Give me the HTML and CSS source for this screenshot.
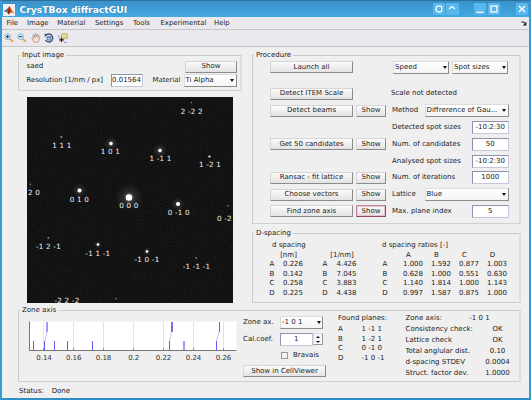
FILE: index.html
```html
<!DOCTYPE html>
<html lang="en">
<head>
<meta charset="utf-8">
<title>CrysTBox diffractGUI</title>
<link rel="stylesheet" href="styles.css">
</head>
<body>
<div class="window">
  <header class="titlebar">
    <svg class="logo" viewBox="0 0 12 12"><rect width="12" height="12" fill="#eef0f4"/><path d="M1 7 4 5.2 6.6 2 8 4.8 11 9.5 8.4 8.2 5.5 10.6 4 8.2Z" fill="#d9541e"/><path d="M1 7 4 5.2 5.4 3.8 4.4 8.4Z" fill="#3f74b8"/><path d="M6.6 2 7 8.8 5.5 10.6 5 7Z" fill="#8d2418"/></svg>
    <h1>CrysTBox diffractGUI</h1>
    <div class="controls">
      <span class="ctl"><svg viewBox="0 0 12 12"><rect x="3.2" y="3.2" width="5.6" height="5.6" rx="1.5"/></svg></span>
      <span class="ctl"><svg viewBox="0 0 12 12"><path d="M3 6 6 3.5 9 6"/></svg></span>
      <span class="ctl gap-l"><svg viewBox="0 0 12 12"><path d="M2.5 9.3H9.5"/></svg></span>
      <span class="ctl"><svg viewBox="0 0 12 12"><rect x="3" y="3" width="6" height="6"/></svg></span>
      <span class="ctl gap-l"><svg viewBox="0 0 12 12"><path d="M3 3 9 9M9 3 3 9"/></svg></span>
    </div>
  </header>
  <nav class="menubar">
    <span class="m1">File</span><span class="m2">Image</span><span class="m3">Material</span><span class="m4">Settings</span><span class="m5">Tools</span><span class="m6">Experimental</span><span>Help</span>
    <svg class="dock" viewBox="0 0 6 5"><path d="M.5 1H3L4.500 3" fill="none" stroke="#111"/><path d="M5.4.8V4.500H2Z" fill="#111"/></svg>
  </nav>
  <div class="toolbar">
    <svg viewBox="0 0 10 10"><path d="M5.8 5.8 9 9" stroke="#d99a3c" stroke-width="1.6"/><circle cx="3.6" cy="3.6" r="2.8" fill="#d4effb" stroke="#7fa9cc" stroke-width=".9"/><path d="M2 3.6H5.2M3.6 2V5.2" stroke="#1c4470" stroke-width="1"/></svg>
    <svg viewBox="0 0 10 10"><path d="M5.8 5.8 9 9" stroke="#d99a3c" stroke-width="1.6"/><circle cx="3.6" cy="3.6" r="2.8" fill="#d4effb" stroke="#7fa9cc" stroke-width=".9"/><path d="M2 3.6H5.2" stroke="#1c4470" stroke-width="1"/></svg>
    <svg viewBox="0 0 10 10"><path d="M3 9 .8 5.5 1.4 4.7 2.7 5.8 1.9 2 2.8 1.5 3.9 4.2 4 .8H5L5.4 4 6.4 1.2 7.3 1.5 7.1 4.6 8.4 3.1 9.1 3.7 7.6 7.5 7 9.4Z" fill="#fae3cc" stroke="#a08a86" stroke-width=".7"/></svg>
    <svg viewBox="0 0 10 10"><path d="M1.7 2.4A4 4 0 1 1 1.4 7.2" fill="none" stroke="#3c5681" stroke-width="1.3"/><path d="M.5.8 4.2 1 1 4Z" fill="#3c5681"/><path d="M3.2 3.6H6.8V7H3.2ZM3.2 4.8H6.8" fill="#c9d6e6" stroke="#4c648c" stroke-width=".8"/></svg>
    <svg viewBox="0 0 10 10"><rect x="3.4" y=".7" width="6" height="5" rx=".5" fill="#dedb8d" stroke="#a3a168" stroke-width=".6"/><path d="M.3 2.2Q1.2 3 1 5.4M6 9.2 9 9.6" fill="none" stroke="#7d78f0" stroke-width=".9"/><path d="M1.2 6.8H5.8M3.5 4.5V9.1" stroke="#111" stroke-width="1.2"/></svg>
  </div>
  <main class="content">
    <div class="columns">
      <section class="left">
        <fieldset class="panel input-panel">
          <legend>Input image</legend>
          <div class="row"><span class="grow">saed</span><button class="btn btn-saed">Show</button></div>
          <div class="row row2"><span class="reslabel">Resolution [1/nm / px]</span><span class="field res">0.01564</span><span class="matlabel">Material</span><span class="select mat">Ti Alpha</span></div>
        </fieldset>
        <svg class="pattern" viewBox="27 97 206 206">
          <defs>
            <radialGradient id="glow"><stop offset="0" stop-color="#fff" stop-opacity=".5"/><stop offset=".4" stop-color="#fff" stop-opacity=".1"/><stop offset="1" stop-color="#fff" stop-opacity="0"/></radialGradient>
            <filter id="grain" x="0" y="0" width="1" height="1"><feTurbulence type="fractalNoise" baseFrequency=".8" numOctaves="2"/><feColorMatrix values="0 0 0 0 1  0 0 0 0 1  0 0 0 0 1  .12 0 0 0 -.04"/></filter>
            <filter id="soft"><feGaussianBlur stdDeviation=".4"/></filter>
          </defs>
          <rect x="27" y="97" width="206" height="206" fill="#0e0e0e"/>
          <rect x="27" y="97" width="206" height="206" filter="url(#grain)"/>
          <g fill="url(#glow)"><circle cx="129" cy="197.500" r="14"/><circle cx="79.500" cy="190.500" r="7"/><circle cx="178" cy="204" r="7"/><circle cx="111" cy="143.500" r="7"/><circle cx="160" cy="150.500" r="7"/><circle cx="98" cy="244.500" r="4"/><circle cx="147" cy="251.500" r="4"/></g>
          <g fill="#fff" filter="url(#soft)"><circle cx="129" cy="197.500" r="3.200"/><circle cx="79.500" cy="190.500" r="2"/><circle cx="178" cy="204" r="2"/><circle cx="111" cy="143.500" r="1.700"/><circle cx="160" cy="150.500" r="1.700"/><circle cx="98" cy="244.500" r="1.300"/><circle cx="147" cy="251.500" r="1.300"/><circle cx="209.500" cy="156.500" r="1.100"/></g>
          <g fill="#999"><circle cx="61.300" cy="137" r="1"/><circle cx="191.500" cy="102.500" r=".7"/><circle cx="30.300" cy="184.300" r=".7"/><circle cx="227.700" cy="205.700" r=".8"/><circle cx="48.300" cy="237.800" r=".9"/><circle cx="196.300" cy="257.800" r=".9"/><circle cx="116" cy="298.700" r=".8"/></g>
          <g class="spots">
            <text x="191.700" y="113.500">2 -2 2</text><text x="61.800" y="147.500">1 1 1</text><text x="110.500" y="154">1 0 1</text><text x="160.500" y="161">1 -1 1</text><text x="210" y="167">1 -2 1</text>
            <text x="30.500" y="194.500">0 2 0</text><text x="79.500" y="201.500">0 1 0</text><text x="129" y="208">0 0 0</text><text x="178.700" y="214.700">0 -1 0</text><text x="228" y="221">0 -2 0</text>
            <text x="48.500" y="248.700">-1 2 -1</text><text x="97.800" y="255.500">-1 1 -1</text><text x="147" y="262">-1 0 -1</text><text x="196.500" y="268.700">-1 -1 -1</text><text x="67" y="302.500">-2 2 -2</text>
          </g>
        </svg>
      </section>
      <section class="right">
        <fieldset class="panel proc">
          <legend>Procedure</legend>
          <div class="prow first"><button class="btn">Launch all</button><span></span><span class="pair"><span class="select">Speed</span><span class="select">Spot sizes</span></span></div>
          <div class="prow"><button class="btn">Detect ITEM Scale</button><span></span><span class="lab nudge">Scale not detected</span></div>
          <div class="prow"><button class="btn">Detect beams</button><button class="btn">Show</button><span class="lab">Method</span><span class="select wide">Diffrerence of Gau...</span></div>
          <div class="prow"><span></span><span></span><span class="lab">Detected spot sizes</span><span class="field">-10:2:30</span></div>
          <div class="prow"><button class="btn">Get 50 candidates</button><button class="btn">Show</button><span class="lab">Num. of candidates</span><span class="field">50</span></div>
          <div class="prow"><span></span><span></span><span class="lab">Analysed spot sizes</span><span class="field">-10:2:30</span></div>
          <div class="prow"><button class="btn">Ransac - fit lattice</button><button class="btn">Show</button><span class="lab">Num. of iterations</span><span class="field">1000</span></div>
          <div class="prow"><button class="btn">Choose vectors</button><button class="btn">Show</button><span class="lab">Lattice</span><span class="select wide">Blue</span></div>
          <div class="prow"><button class="btn">Find zone axis</button><button class="btn focus">Show</button><span class="lab">Max. plane index</span><span class="field">5</span></div>
        </fieldset>
        <fieldset class="panel dsp">
          <legend>D-spacing</legend>
          <div class="dgrid">
            <span class="h1c">d spacing</span><span class="h2c">d spacing ratios [-]</span>
            <span></span><span class="hd">[nm]</span><span></span><span></span><span class="hd">[1/nm]</span><span></span><span></span><span></span><span class="hd">A</span><span class="hd">B</span><span class="hd">C</span><span class="hd">D</span>
            <span>A</span><span>0.226</span><span></span><span>A</span><span>4.426</span><span></span><span>A</span><span></span><span>1.000</span><span>1.592</span><span>0.877</span><span>1.003</span>
            <span>B</span><span>0.142</span><span></span><span>B</span><span>7.045</span><span></span><span>B</span><span></span><span>0.628</span><span>1.000</span><span>0.551</span><span>0.630</span>
            <span>C</span><span>0.258</span><span></span><span>C</span><span>3.883</span><span></span><span>C</span><span></span><span>1.140</span><span>1.814</span><span>1.000</span><span>1.143</span>
            <span>D</span><span>0.225</span><span></span><span>D</span><span>4.438</span><span></span><span>D</span><span></span><span>0.997</span><span>1.587</span><span>0.875</span><span>1.000</span>
          </div>
        </fieldset>
      </section>
    </div>
    <fieldset class="panel zone">
      <legend>Zone axis</legend>
      <div class="zcols">
        <svg class="plot" viewBox="24 314 216 50">
          <rect x="29.500" y="321.500" width="207" height="29" fill="#fff"/>
          <path d="M43.500 322V350M73.500 322V350M103.500 322V350M133.500 322V350M163.500 322V350M193.500 322V350M223.500 322V350" stroke="#e2e2e2"/>
          <path d="M45 341 47.300 331M169.500 341 171.700 331M216.500 341 219.300 331" stroke="#c4c4f8" fill="none"/>
          <path d="M33.500 341V350M44.500 341V350M54.500 341V350M67.500 341V350M92.500 341V350M169.500 341V350M216.500 341V350M219.500 322V332" stroke="#5c5cf5"/>
          <path d="M47 322V332" stroke="#9c9cf8" stroke-width="2"/><path d="M172 322V332" stroke="#7070f5" stroke-width="2"/><path d="M184 341V350" stroke="#9c9cf8" stroke-width="2"/>
          <path d="M29.500 321.500V350.500H236.500M43.500 350V348.500M73.500 350V348.500M103.500 350V348.500M133.500 350V348.500M163.500 350V348.500M193.500 350V348.500M223.500 350V348.500" fill="none" stroke="#555" stroke-width=".8"/>
          <g class="ticks"><text x="44" y="359.500">0.14</text><text x="73.700" y="359.500">0.16</text><text x="103.500" y="359.500">0.18</text><text x="133.700" y="359.500">0.2</text><text x="163.500" y="359.500">0.22</text><text x="193.500" y="359.500">0.24</text><text x="223.500" y="359.500">0.26</text></g>
        </svg>
        <div class="zctl">
          <div class="zr"><span class="zl">Zone ax.</span><span class="select zs">-1 0 1</span></div>
          <div class="zr"><span class="zl">Cal.coef.</span><span class="field zf">1</span><span class="spin"><i class="up"></i><i class="down"></i></span></div>
          <div class="zr chk"><i class="box"></i><span>Bravais</span></div>
          <button class="btn cell">Show in CellViewer</button>
        </div>
        <div class="found">
          <span class="fh">Found planes:</span>
          <span>A</span><span>1 -1 1</span><span>B</span><span>1 -2 1</span><span>C</span><span>0 -1 0</span><span>D</span><span>-1 0 -1</span>
        </div>
        <div class="checks">
          <span>Zone axis:</span><span class="zv">-1 0 1</span>
          <span>Consistency check:</span><span>OK</span>
          <span>Lattice check</span><span>OK</span>
          <span>Total anglular dist.</span><span>0.10</span>
          <span>d-spacing STDEV</span><span>0.0004</span>
          <span>Struct. factor dev.</span><span>1.0000</span>
        </div>
      </div>
    </fieldset>
    <footer class="status"><span>Status:</span><span>Done</span></footer>
  </main>
</div>
</body>
</html>
```
FILE: styles.css
```css
* { box-sizing: border-box; }
body {
  margin: 0;
  width: 531px;
  height: 400px;
  overflow: hidden;
  font: 7px/9px "DejaVu Sans", sans-serif;
  color: #222;
}
.window {
  display: flex;
  flex-direction: column;
  width: 531px;
  height: 400px;
  background: #efefef;
  border: 2px solid #3a9bd3;
  border-top: 1px solid #2b6f9c;
  border-bottom-color: #2f8fc6;
  white-space: nowrap;
}
.titlebar {
  display: flex;
  align-items: center;
  height: 16px;
  padding-left: 1px;
  background: linear-gradient(#3a92c8, #43a8e2);
  color: #fff;
}
.logo { width: 12px; height: 12px; margin-top: 1px; }
h1 {
  flex: 1;
  margin: 1px 0 0 4.5px;
  font-size: 9.2px;
  line-height: 14px;
  text-shadow: 0 0 1px #2c6f9c;
}
.controls { display: flex; gap: 1.5px; margin-right: 1px; }
.ctl { width: 12.3px; height: 12.3px; background: #58b7ec; border-radius: 1px; }
.ctl.gap-l { margin-left: 14px; }
.ctl svg { display: block; width: 12px; height: 12px; fill: none; stroke: #fff; stroke-width: 1.3; }
.menubar {
  display: flex;
  align-items: center;
  height: 13px;
  padding-left: 4.5px;
  background: #ebe9ed;
  border-bottom: 1px solid #c6c5c8;
}
.menubar span { font-size: 6.9px; }
.m1, .m2, .m3, .m4, .m5, .m6 { flex: none; }
.m1 { width: 20.5px; }
.m2 { width: 30.3px; }
.m3 { width: 37.7px; }
.m4 { width: 38px; }
.m5 { width: 27.5px; }
.m6 { width: 53.5px; }
.dock { width: 6px; height: 5px; margin-left: auto; margin-right: 2.5px; }
.toolbar {
  display: flex;
  align-items: center;
  gap: 3.4px;
  height: 17px;
  padding-left: 2px;
  background: #ebe9ed;
  border-bottom: 1px solid #c6c5c8;
}
.toolbar svg { width: 10px; height: 10px; fill: none; }
.content { flex: 1; padding: 3px 8px 0 16px; }
.columns { display: flex; justify-content: space-between; height: 255px; }
.left { width: 224px; }
.right { width: 269px; }
.panel {
  margin: 0;
  padding: 0;
  min-width: 0;
  border: 1px solid #cbcbcb;
  border-right: 2px solid #dedede;
  border-bottom-color: #d0d0d0;
}
legend { margin-left: 1px; padding: 1px 2px 0; line-height: 9px; }
.input-panel { height: 41px; }
.row { display: flex; align-items: center; height: 13px; padding: 0 3px 0 7.5px; }
.row2 { height: 14px; }
.grow { flex: 1; }
.btn {
  display: block;
  height: 12px;
  padding: 0;
  border: 1px solid #d6d6d6;
  border-right-color: #8b8b8b;
  border-bottom-color: #8b8b8b;
  border-radius: 0;
  background: linear-gradient(#fbfbfb, #e3e3e3);
  color: #222;
  font: 7px/9px "DejaVu Sans", sans-serif;
  text-align: center;
}
.btn.focus { border-color: #c588a3; border-right-color: #8e4868; border-bottom-color: #8e4868; outline: 1px solid #e5c3d1; outline-offset: -2px; }
.btn-saed { width: 52px; }
.reslabel { width: 84px; font-size: 6.9px; }
.field {
  height: 13px;
  border: 1px solid #8f8fae;
  border-right-color: #c6c6da;
  border-bottom-color: #c6c6da;
  background: #fff;
  text-align: center;
  line-height: 11px;
}
.res { width: 32px; }
.matlabel { margin-left: 10px; width: 31px; font-size: 6.9px; }
.select {
  display: flex;
  align-items: center;
  justify-content: space-between;
  height: 13px;
  padding: 0 1.5px 0 1px;
  border: 1px solid #dcdcdc;
  border-right-color: #8b8b8b;
  border-bottom-color: #8b8b8b;
  background: linear-gradient(#fff, #f4f4f4);
}
.select::after { content: ""; border: 2.5px solid transparent; border-top: 3px solid #111; border-bottom: 0; }
.mat { width: 53px; }
.pattern { display: block; width: 206px; height: 206px; margin: 6px 0 0 9px; overflow: visible; }
.spots { fill: #f2f2f2; font-size: 7.2px; text-anchor: middle; letter-spacing: .2px; }
.proc { height: 174px; }
.prow {
  display: grid;
  grid-template-columns: 83px 30px auto 1fr;
  column-gap: 3px;
  align-items: center;
  height: 16.8px;
  padding: 0 10.5px 0 17px;
}
.prow.first { margin-bottom: 9.7px; margin-top: -1px; }
.pair { display: flex; gap: 3px; margin-left: 4px; grid-column: 3 / 5; }
.pair .select { width: 56px; }
.lab { margin-left: 3px; }
.nudge { margin-left: 2px; }
.prow > .field { width: 36.5px; justify-self: end; }
.wide { width: 84px; justify-self: end; }
.dsp { margin-top: 4px; height: 75px; }
.dgrid {
  display: grid;
  grid-template-columns: 20px 22px 11px 20px 23px 17px 20px 4px 28px 28px 28px 28px;
  grid-auto-rows: 9.5px;
  margin: 3px 0 0 9px;
  text-align: center;
  line-height: 9.5px;
}
.h1c { grid-column: 1 / 4; text-align: left; padding-left: 10px; }
.h2c { grid-column: 4 / 13; text-align: left; padding-left: 67px; }
.hd { margin-left: -9px; }
.zone { height: 77px; }
.zcols { display: flex; margin-left: 5px; margin-top: -1px; }
.plot { flex: none; width: 216px; height: 50px; }
.ticks { fill: #333; font-size: 7px; text-anchor: middle; }
.zctl { width: 98px; padding: 1px 0 0 3px; }
.zr { display: flex; align-items: center; height: 16.5px; }
.zr:first-child { height: 15px; margin-bottom: 1px; }
.zl { width: 37px; }
.zs { width: 43px; }
.zf { width: 32.5px; }
.spin { display: flex; flex-direction: column; justify-content: space-around; align-items: center; width: 10.5px; height: 12px; border: 1px solid #ddd; border-right-color: #999; border-bottom-color: #999; background: #f6f6f6; }
.up, .down { border: 2px solid transparent; }
.up { border-bottom: 2.5px solid #111; border-top: 0; }
.down { border-top: 2.5px solid #111; border-bottom: 0; }
.chk { padding-left: 38px; gap: 5px; }
.box { width: 7px; height: 7px; border: 1px solid #999; background: #f3f3f3; }
.cell { width: 83px; margin-top: 1px; }
.found { display: grid; grid-template-columns: 23.5px 30px; grid-template-rows: 11px; grid-auto-rows: 9.5px; width: 67.5px; }
.fh { grid-column: 1 / 3; }
.checks { display: grid; grid-template-columns: 77px 30px; grid-auto-rows: 11.1px; margin-top: -1px; line-height: 11px; }
.checks span:nth-child(even) { text-align: center; }
.checks .zv { margin-left: -36px; }
.status { display: flex; gap: 8px; padding: 4.5px 0 0 1px; }
```
